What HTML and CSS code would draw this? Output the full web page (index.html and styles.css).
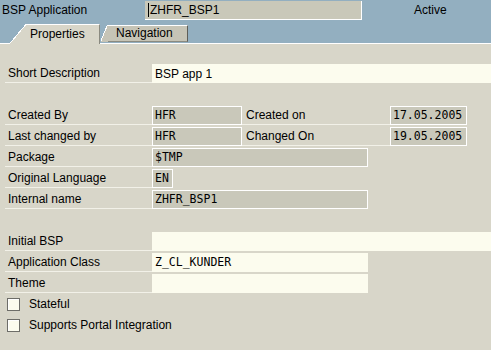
FILE: index.html
```html
<!DOCTYPE html>
<html lang="en">
<head>
  <meta charset="UTF-8" />
  <title>BSP Application</title>
  <link rel="stylesheet" href="styles.css">
</head>
<body>

  <div class="header">
    <div class="title">BSP Application</div>
    <div class="app-name"><span class="caret"></span>ZHFR_BSP1</div>
    <div class="status">Active</div>
  </div>

  <div class="tabs">
    <div class="tab active">
      <div class="slant"></div>
      <div class="tab-label">Properties</div>
    </div>
    <div class="tab">
      <div class="slant"></div>
      <div class="tab-label">Navigation</div>
    </div>
  </div>

  <div class="form">
    <div class="row">
      <div class="label">Short Description</div>
      <div class="field input wide sans">BSP app 1</div>
    </div>

    <div class="row"></div>

    <div class="row">
      <div class="label">Created By</div>
      <div class="field user">HFR</div>
      <div class="label second">Created on</div>
      <div class="field date">17.05.2005</div>
    </div>
    <div class="row">
      <div class="label">Last changed by</div>
      <div class="field user">HFR</div>
      <div class="label second">Changed On</div>
      <div class="field date">19.05.2005</div>
    </div>
    <div class="row">
      <div class="label">Package</div>
      <div class="field long">$TMP</div>
    </div>
    <div class="row">
      <div class="label">Original Language</div>
      <div class="field lang">EN</div>
    </div>
    <div class="row">
      <div class="label">Internal name</div>
      <div class="field long">ZHFR_BSP1</div>
    </div>

    <div class="row"></div>

    <div class="row">
      <div class="label">Initial BSP</div>
      <div class="field input wide"></div>
    </div>
    <div class="row">
      <div class="label">Application Class</div>
      <div class="field input long">Z_CL_KUNDER</div>
    </div>
    <div class="row">
      <div class="label">Theme</div>
      <div class="field input long"></div>
    </div>

    <div class="check-row">
      <span class="checkbox"></span>
      <span>Stateful</span>
    </div>
    <div class="check-row">
      <span class="checkbox"></span>
      <span>Supports Portal Integration</span>
    </div>
  </div>

</body>
</html>
```

FILE: styles.css
```css
* {
  margin: 0;
  padding: 0;
  box-sizing: border-box;
}

body {
  font-family: 'Liberation Sans', Arial, sans-serif;
  font-size: 12px;
  color: #000;
  background: #d8d6c9;
  width: 491px;
  height: 350px;
  overflow: hidden;
}

/* top bar */
.header {
  display: flex;
  align-items: flex-start;
  height: 20px;
  background: #93afc0;
}

.header .title {
  width: 145px;
  padding-left: 2px;
  line-height: 20px;
}

.app-name {
  width: 217px;
  height: 19px;
  margin-top: 1px;
  padding-left: 3px;
  line-height: 18px;
  background: #c9c8b9;
  border-right: 1px solid #fff;
  border-bottom: 1px solid #fff;
}

.caret {
  display: inline-block;
  width: 1px;
  height: 14px;
  margin-right: 1px;
  vertical-align: -3px;
  background: #000;
}

.status {
  margin-left: 52px;
  line-height: 20px;
}

/* tab strip */
.tabs {
  display: flex;
  align-items: flex-end;
  height: 24px;
  padding-left: 10px;
  background: linear-gradient(to bottom, #93afc0 23px, #fff 23px);
}

.tab {
  display: flex;
  height: 17px;
  margin-bottom: 2px;
  margin-left: 1px;
}

.tab .slant {
  width: 7px;
  background: linear-gradient(to bottom right, #93afc0 calc(50% - 1px), #fff calc(50% - 1px), #fff 50%, #c6c4b6 50%);
}

.tab .tab-label {
  width: 80px;
  padding-left: 8px;
  line-height: 15px;
  background: #c6c4b6;
  border-top: 1px solid #fff;
  border-right: 1px solid #5e5e58;
  border-bottom: 1px solid #8a8a80;
}

.tab.active {
  height: 20px;
  margin-bottom: 0;
  margin-left: 0;
}

.tab.active .slant {
  width: 17px;
  background: linear-gradient(to bottom right, #93afc0 calc(50% - 1px), #fff calc(50% - 1px), #fff 50%, #d8d6c9 50%);
}

.tab.active .tab-label {
  width: 73px;
  padding-left: 3px;
  line-height: 18px;
  background: #d8d6c9;
  border-right: 1px solid #8a8a80;
  border-bottom: none;
}

/* form */
.form {
  padding-top: 18px;
}

.row {
  display: flex;
  align-items: flex-end;
  height: 21px;
}

.label {
  width: 147px;
  height: 21px;
  margin-left: 5px;
  padding: 3px 0 0 3px;
  line-height: 17px;
  border-bottom: 1px solid #f2f1e8;
}

.label.second {
  width: 148px;
  margin-left: 0;
  padding-left: 4px;
}

.field {
  height: 19px;
  padding: 0 0 0 2px;
  line-height: 16px;
  font-family: 'DejaVu Sans Mono', 'Liberation Mono', monospace;
  font-size: 11.5px;
  background: #c9c8ba;
  border: 1px solid #fff;
  white-space: nowrap;
}

.field.input {
  background: #fcfcee;
  border-color: #fcfcee;
}

.field.sans {
  padding-top: 1px;
  font-family: 'Liberation Sans', Arial, sans-serif;
  font-size: 12px;
}

.field.wide {
  flex: 1;
}

.field.long {
  width: 216px;
}

.field.user {
  width: 90px;
}

.field.date {
  width: 77px;
}

.field.lang {
  width: 21px;
}

.check-row {
  display: flex;
  align-items: center;
  gap: 9px;
  height: 21px;
  padding-left: 7px;
}

.checkbox {
  width: 13px;
  height: 13px;
  margin-top: 1px;
  background: #fcfcee;
  border: 1px solid #6d6d68;
  box-shadow: inset 1px 1px 0 #fff;
}
```
